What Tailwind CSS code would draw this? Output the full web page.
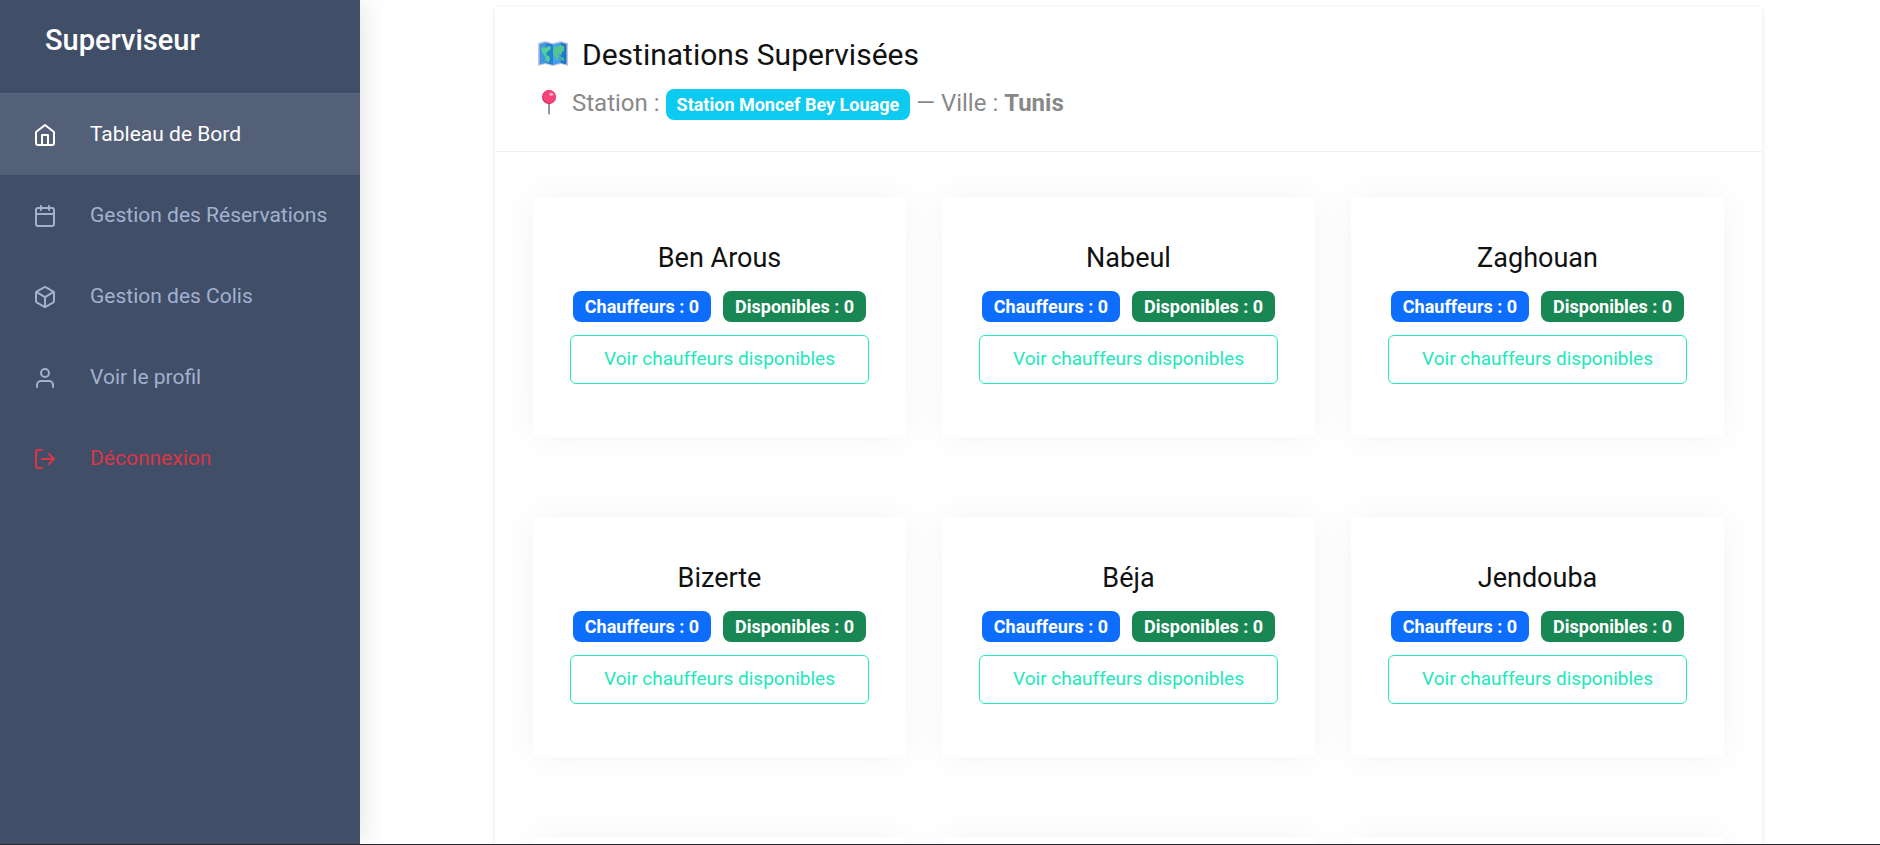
<!DOCTYPE html>
<html lang="fr">
<head>
    <meta charset="UTF-8">
    <meta name="viewport" content="width=device-width, initial-scale=1.0">
    <title>Superviseur - Tableau de Bord</title>
    <script src="https://cdn.jsdelivr.net/npm/@tailwindcss/browser@4"></script>
</head>
<body class="bg-white font-[Roboto,sans-serif] text-[#111111]">
    <div class="flex h-screen overflow-hidden border-b border-[#2a2a2e]">

        <!-- Sidebar -->
        <aside class="w-[360px] shrink-0 bg-[#404e67] shadow-[0_0_28px_rgba(0,0,0,0.13)]">
            <div class="h-[93px] pl-[45px] pt-5">
                <h1 class="text-[29px] leading-10 font-medium text-white">Superviseur</h1>
            </div>
            <nav class="text-[21px] leading-[33px] text-[#a3b1d0]">
                <a href="#" class="flex h-[82px] items-center gap-[33px] border-t border-[#566683] bg-[#546078] pl-[33px] text-white">
                    <svg class="size-6" viewBox="0 0 24 24" fill="none" stroke="currentColor" stroke-width="2" stroke-linecap="round" stroke-linejoin="round"><path d="M3 9l9-7 9 7v11a2 2 0 0 1-2 2H5a2 2 0 0 1-2-2z"/><path d="M9 22V12h6v10"/></svg>
                    Tableau de Bord
                </a>
                <a href="#" class="flex h-[81px] items-center gap-[33px] pl-[33px]">
                    <svg class="size-6" viewBox="0 0 24 24" fill="none" stroke="currentColor" stroke-width="2" stroke-linecap="round" stroke-linejoin="round"><rect x="3" y="4" width="18" height="18" rx="2"/><path d="M16 2v4M8 2v4M3 10h18"/></svg>
                    Gestion des Réservations
                </a>
                <a href="#" class="flex h-[81px] items-center gap-[33px] pl-[33px]">
                    <svg class="size-6" viewBox="0 0 24 24" fill="none" stroke="currentColor" stroke-width="2" stroke-linecap="round" stroke-linejoin="round"><path d="M21 16V8a2 2 0 0 0-1-1.730l-7-4a2 2 0 0 0-2 0l-7 4A2 2 0 0 0 3 8v8a2 2 0 0 0 1 1.730l7 4a2 2 0 0 0 2 0l7-4A2 2 0 0 0 21 16z"/><path d="M3.270 6.960L12 12.010l8.730-5.050M12 22.080V12"/></svg>
                    Gestion des Colis
                </a>
                <a href="#" class="flex h-[81px] items-center gap-[33px] pl-[33px]">
                    <svg class="size-6" viewBox="0 0 24 24" fill="none" stroke="currentColor" stroke-width="2" stroke-linecap="round" stroke-linejoin="round"><path d="M20 21v-2a4 4 0 0 0-4-4H8a4 4 0 0 0-4 4v2"/><circle cx="12" cy="7" r="4"/></svg>
                    Voir le profil
                </a>
                <a href="#" class="flex h-[81px] items-center gap-[33px] pl-[33px] text-[#dc3545]">
                    <svg class="size-6" viewBox="0 0 24 24" fill="none" stroke="currentColor" stroke-width="2" stroke-linecap="round" stroke-linejoin="round"><path d="M9 21H5a2 2 0 0 1-2-2V5a2 2 0 0 1 2-2h4M16 17l5-5-5-5M21 12H9"/></svg>
                    Déconnexion
                </a>
            </nav>
        </aside>

        <!-- Content -->
        <main class="min-w-0 grow pt-[7px] pr-[118px] pl-[135px]">
            <section class="min-h-full bg-white shadow-[0_1px_5px_rgba(0,0,0,0.1)]">
                <header class="h-[145px] border-b border-[#f1f1f1] pt-[27px] pl-[43px]">
                    <h2 class="flex h-10 items-center gap-[14px] text-[30px]">
                        <svg class="h-[26px] w-[30px]" viewBox="0 0 30 26">
                            <path d="M0 2l7-2 8 2 8-2 7 2v23l-7-2-8 2-8-2-7 2z" fill="#c5c8dc"/>
                            <path d="M1.500 3L7.500 1.500V22l-6 1.500z" fill="#3f95e0"/>
                            <path d="M7.500 1.500L15 3.500v20.500L7.500 22z" fill="#2480d0"/>
                            <path d="M15 3.500l7.500-2V22L15 24z" fill="#459ff0"/>
                            <path d="M22.500 1.500l6 1.500v20.500l-6-1.500z" fill="#1b78c6"/>
                            <path d="M3 8l2-2 3 1 2-2 3 1-1 3-3 2-1 3 3 1 1 3-2 4-2-3-1-4-2-2z" fill="#54cf9a"/>
                            <path d="M15 9l2-4 3 1 2-2 4 1v5l-2 1v3l-2-2-2 2 1 2-2 4-2-4-2-2z" fill="#54c590"/>
                            <path d="M23 16l3 1v3l-3-1z" fill="#4ebc85"/>
                        </svg>
                        Destinations Supervisées
                    </h2>
                    <p class="flex items-baseline pt-[11px] text-[24px] leading-9 text-[#888888]">
                        <svg class="mr-4 ml-1 h-[26px] w-[14px] self-center" viewBox="0 0 14 26">
                            <path d="M6 12h2v11.500l-1 1.500-1-1.500z" fill="#9694ad"/>
                            <circle cx="7" cy="7" r="7" fill="#d92b58"/>
                            <circle cx="7.300" cy="6.500" r="6.400" fill="#f8437a"/>
                            <ellipse cx="9.300" cy="4.200" rx="1.800" ry="1.500" fill="#ffc3d3"/>
                        </svg>
                        Station :
                        <span class="mx-[6px] h-[31px] rounded-lg bg-[#0dcaf0] px-[11px] text-[18px] leading-[31px] font-bold text-white">Station Moncef Bey Louage</span>
                        — Ville :&nbsp;<strong class="font-bold">Tunis</strong>
                    </p>
                </header>

                <div class="grid grid-cols-3 gap-x-9 gap-y-20 px-[38px] pt-[45px]">
                    <article class="flex h-60 flex-col px-[37px] pt-[41px] text-center shadow-[0_0_35px_rgba(0,0,0,0.05)]">
                        <h3 class="text-[27px] leading-10">Ben Arous</h3>
                        <div class="mt-[13px] flex justify-center gap-3 text-[18px] leading-[31px] font-bold text-white">
                            <span class="rounded-lg bg-[#0d6efd] px-3">Chauffeurs : 0</span>
                            <span class="rounded-lg bg-[#198754] px-3">Disponibles : 0</span>
                        </div>
                        <button class="mt-[13px] h-[49px] rounded-md border border-[#23e8b9] text-[19px] text-[#23e8b9]">Voir chauffeurs disponibles</button>
                    </article>
                    <article class="flex h-60 flex-col px-[37px] pt-[41px] text-center shadow-[0_0_35px_rgba(0,0,0,0.05)]">
                        <h3 class="text-[27px] leading-10">Nabeul</h3>
                        <div class="mt-[13px] flex justify-center gap-3 text-[18px] leading-[31px] font-bold text-white">
                            <span class="rounded-lg bg-[#0d6efd] px-3">Chauffeurs : 0</span>
                            <span class="rounded-lg bg-[#198754] px-3">Disponibles : 0</span>
                        </div>
                        <button class="mt-[13px] h-[49px] rounded-md border border-[#23e8b9] text-[19px] text-[#23e8b9]">Voir chauffeurs disponibles</button>
                    </article>
                    <article class="flex h-60 flex-col px-[37px] pt-[41px] text-center shadow-[0_0_35px_rgba(0,0,0,0.05)]">
                        <h3 class="text-[27px] leading-10">Zaghouan</h3>
                        <div class="mt-[13px] flex justify-center gap-3 text-[18px] leading-[31px] font-bold text-white">
                            <span class="rounded-lg bg-[#0d6efd] px-3">Chauffeurs : 0</span>
                            <span class="rounded-lg bg-[#198754] px-3">Disponibles : 0</span>
                        </div>
                        <button class="mt-[13px] h-[49px] rounded-md border border-[#23e8b9] text-[19px] text-[#23e8b9]">Voir chauffeurs disponibles</button>
                    </article>
                    <article class="flex h-60 flex-col px-[37px] pt-[41px] text-center shadow-[0_0_35px_rgba(0,0,0,0.05)]">
                        <h3 class="text-[27px] leading-10">Bizerte</h3>
                        <div class="mt-[13px] flex justify-center gap-3 text-[18px] leading-[31px] font-bold text-white">
                            <span class="rounded-lg bg-[#0d6efd] px-3">Chauffeurs : 0</span>
                            <span class="rounded-lg bg-[#198754] px-3">Disponibles : 0</span>
                        </div>
                        <button class="mt-[13px] h-[49px] rounded-md border border-[#23e8b9] text-[19px] text-[#23e8b9]">Voir chauffeurs disponibles</button>
                    </article>
                    <article class="flex h-60 flex-col px-[37px] pt-[41px] text-center shadow-[0_0_35px_rgba(0,0,0,0.05)]">
                        <h3 class="text-[27px] leading-10">Béja</h3>
                        <div class="mt-[13px] flex justify-center gap-3 text-[18px] leading-[31px] font-bold text-white">
                            <span class="rounded-lg bg-[#0d6efd] px-3">Chauffeurs : 0</span>
                            <span class="rounded-lg bg-[#198754] px-3">Disponibles : 0</span>
                        </div>
                        <button class="mt-[13px] h-[49px] rounded-md border border-[#23e8b9] text-[19px] text-[#23e8b9]">Voir chauffeurs disponibles</button>
                    </article>
                    <article class="flex h-60 flex-col px-[37px] pt-[41px] text-center shadow-[0_0_35px_rgba(0,0,0,0.05)]">
                        <h3 class="text-[27px] leading-10">Jendouba</h3>
                        <div class="mt-[13px] flex justify-center gap-3 text-[18px] leading-[31px] font-bold text-white">
                            <span class="rounded-lg bg-[#0d6efd] px-3">Chauffeurs : 0</span>
                            <span class="rounded-lg bg-[#198754] px-3">Disponibles : 0</span>
                        </div>
                        <button class="mt-[13px] h-[49px] rounded-md border border-[#23e8b9] text-[19px] text-[#23e8b9]">Voir chauffeurs disponibles</button>
                    </article>
                    <article class="h-60 shadow-[0_0_35px_rgba(0,0,0,0.05)]"></article>
                    <article class="h-60 shadow-[0_0_35px_rgba(0,0,0,0.05)]"></article>
                    <article class="h-60 shadow-[0_0_35px_rgba(0,0,0,0.05)]"></article>
                </div>
            </section>
        </main>
    </div>
</body>
</html>
